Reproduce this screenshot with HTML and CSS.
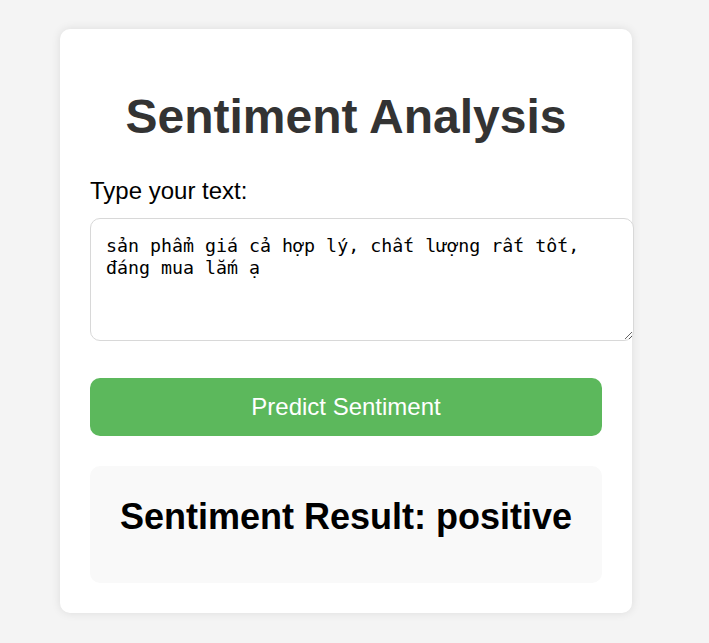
FILE: index.html
```html
<!DOCTYPE html>
<html lang="vi">
<head>
<meta charset="utf-8">
<title>Sentiment Analysis</title>
<link rel="stylesheet" href="styles.css">
</head>
<body>
<main class="card">
  <h1 class="title">Sentiment Analysis</h1>
  <label class="label" for="text">Type your text:</label>
  <textarea class="input" id="text">sản phẩm giá cả hợp lý, chất lượng rất tốt, đáng mua lắm ạ</textarea>
  <button class="btn" type="button">Predict Sentiment</button>
  <section class="result">
    <h2 class="result-text">Sentiment Result: positive</h2>
  </section>
</main>
</body>
</html>
```

FILE: styles.css
```css
html, body {
  margin: 0;
  padding: 0;
}
body {
  background: #f4f4f4;
  font-family: "Liberation Sans", Arial, sans-serif;
  color: #000;
}
.card {
  box-sizing: border-box;
  width: 572px;
  margin: 29px 0 30px 60px;
  padding: 30px;
  background: #fff;
  border-radius: 10px;
  box-shadow: 0 0 10px rgba(0, 0, 0, 0.1);
  display: flex;
  flex-direction: column;
  align-items: stretch;
}
.title {
  margin: 30px 0 34px;
  font-size: 48px;
  font-weight: bold;
  line-height: 55px;
  color: #333;
  text-align: center;
}
.label {
  display: block;
  font-size: 24px;
  line-height: 26px;
  margin: 0 0 14px;
}
.input {
  display: block;
  box-sizing: border-box;
  width: 544px;
  height: 123px;
  padding: 16px 15px;
  border: 1px solid #d8d8d8;
  border-radius: 10px;
  font-family: "DejaVu Sans Mono", monospace;
  font-size: 18.3px;
  line-height: 21.5px;
  color: #000;
  background: #fff;
  margin: 0 0 37px;
}
.btn {
  display: block;
  width: 100%;
  height: 58px;
  border: none;
  border-radius: 10px;
  background: #5cb85c;
  color: #fff;
  font-family: "Liberation Sans", Arial, sans-serif;
  font-size: 24px;
  margin: 0 0 30px;
  padding: 0;
}
.result {
  background: #f9f9f9;
  border-radius: 10px;
  height: 117px;
  box-sizing: border-box;
  padding: 30px 20px 0;
}
.result-text {
  margin: 0;
  font-size: 36px;
  line-height: 41px;
  font-weight: bold;
  text-align: center;
  color: #000;
}
```
